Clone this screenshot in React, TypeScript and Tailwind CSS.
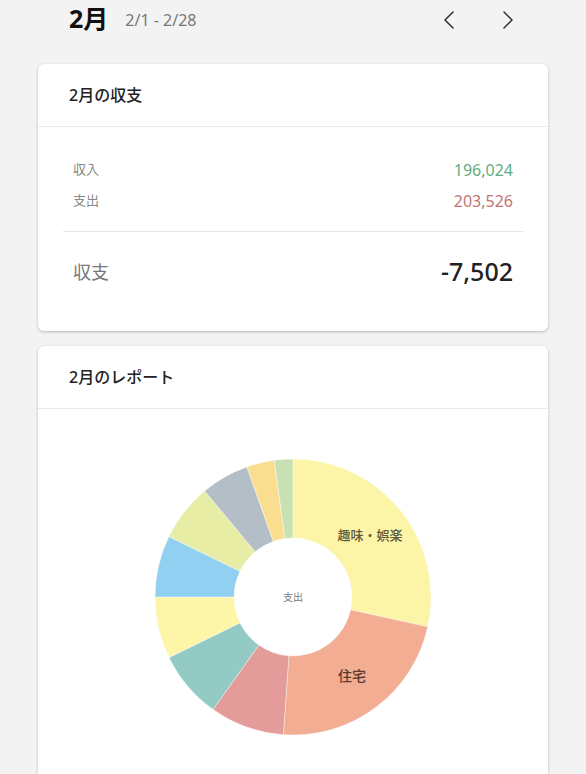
import { ChevronLeft, ChevronRight } from 'lucide-react';

const font = { fontFamily: '"Noto Sans", "Noto Sans CJK JP", sans-serif' };

const slices = [
	{ from: 0, to: 102.5, color: '#fcf4a6' },
	{ from: 102.5, to: 184, color: '#f2ad92' },
	{ from: 184, to: 215.4, color: '#e39c99' },
	{ from: 215.4, to: 244, color: '#93cac3' },
	{ from: 244, to: 270, color: '#fdf5a8' },
	{ from: 270, to: 296, color: '#92d0f2' },
	{ from: 296, to: 320.2, color: '#e8eda5' },
	{ from: 320.2, to: 340.5, color: '#b4bec6' },
	{ from: 340.5, to: 352.2, color: '#f9de8f' },
	{ from: 352.2, to: 360, color: '#c7e1b3' },
];

const C = 138;
const R = 138;
const r = 59;

const pt = (deg: number, rad: number) => {
	const a = (deg * Math.PI) / 180;
	return `${(C + rad * Math.sin(a)).toFixed(2)} ${(C - rad * Math.cos(a)).toFixed(2)}`;
};

const arc = (from: number, to: number) => {
	const large = to - from > 180 ? 1 : 0;
	return `M ${pt(from, R)} A ${R} ${R} 0 ${large} 1 ${pt(to, R)} L ${pt(to, r)} A ${r} ${r} 0 ${large} 0 ${pt(from, r)} Z`;
};

const Donut = () => (
	<svg width="276" height="276" viewBox="0 0 276 276">
		{slices.map((s) => (
			<path key={s.from} d={arc(s.from, s.to)} fill={s.color} stroke="#ffffff" strokeWidth="0.4" />
		))}
		<text x="215" y="81" textAnchor="middle" fontSize="13" fontWeight="500" fill="#5f5a3c" style={font}>
			趣味・娯楽
		</text>
		<text x="197" y="222" textAnchor="middle" fontSize="14" fontWeight="500" fill="#5b3b31" style={font}>
			住宅
		</text>
		<text x="138" y="142" textAnchor="middle" fontSize="10" fill="#7a7a7a" style={font}>
			支出
		</text>
	</svg>
);

const Card = ({ title, children }: { title: string; children: React.ReactNode }) => (
	<div className="bg-white rounded-md shadow-[0_1px_3px_rgba(0,0,0,0.25)]">
		<div className="h-[63px] flex items-center px-[31px] border-b border-[#e9e9e9]">
			<h2 className="text-[16px] font-medium text-[#222]">{title}</h2>
		</div>
		{children}
	</div>
);

const App = () => {
	return (
		<div className="min-h-screen bg-[#f3f3f3] px-[38px] overflow-hidden h-[774px]" style={font}>
			<div className="h-[40px] flex items-center px-[31px]">
				<h1 className="text-[25px] font-bold text-[#111] leading-none -mt-[3px]">2月</h1>
				<span className="ml-[17px] text-[16px] text-[#777] leading-none">2/1 - 2/28</span>
				<div className="ml-auto flex items-center gap-[27px] text-[#333] -mr-[7px]">
					<ChevronLeft size={32} strokeWidth={1.15} />
					<ChevronRight size={32} strokeWidth={1.15} />
				</div>
			</div>
			<div className="mt-[24px] flex flex-col gap-[15px]">
				<Card title="2月の収支">
					<div className="px-[25px] pt-[32px] pb-[39px]">
						<div className="px-[10px] flex flex-col gap-[9px] pb-[19px] border-b border-[#e6e6e6]">
							<div className="flex items-center justify-between h-[22px]">
								<span className="text-[13px] text-[#888]">収入</span>
								<span className="text-[16px] text-[#62ad82]">196,024</span>
							</div>
							<div className="flex items-center justify-between h-[22px]">
								<span className="text-[13px] text-[#888]">支出</span>
								<span className="text-[16px] text-[#c47474]">203,526</span>
							</div>
						</div>
						<div className="px-[10px] flex items-center justify-between h-[40px] mt-[20px]">
							<span className="text-[18px] text-[#777]">収支</span>
							<span className="text-[25px] font-medium text-[#222]">-7,502</span>
						</div>
					</div>
				</Card>
				<Card title="2月のレポート">
					<div className="flex justify-center pt-[50px] pb-[60px]">
						<Donut />
					</div>
				</Card>
			</div>
		</div>
	);
};

export default App;
